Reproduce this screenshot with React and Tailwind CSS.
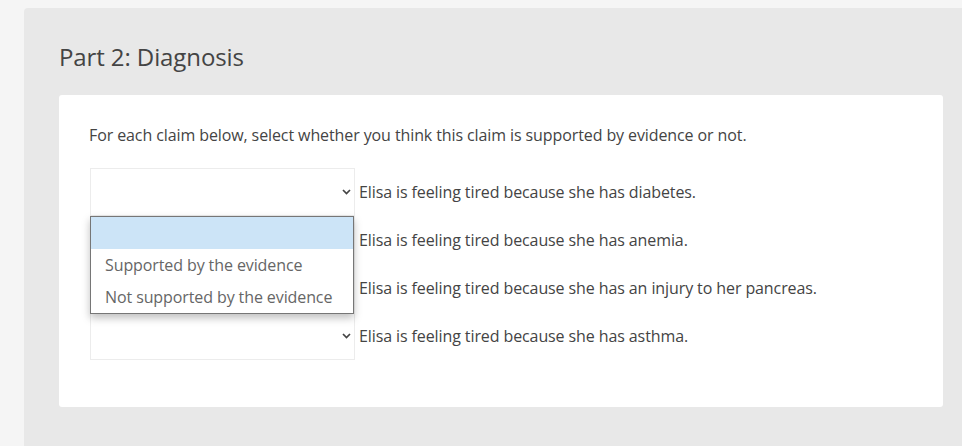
const claims = [
  "Elisa is feeling tired because she has diabetes.",
  "Elisa is feeling tired because she has anemia.",
  "Elisa is feeling tired because she has an injury to her pancreas.",
  "Elisa is feeling tired because she has asthma.",
];

function Chevron() {
  return (
    <svg width="9" height="6" viewBox="0 0 9 6" className="text-[#444]">
      <path d="M1 1l3.5 3.5L8 1" fill="none" stroke="currentColor" strokeWidth="1.7" />
    </svg>
  );
}

export default function App() {
  return (
    <div className="min-h-[446px] bg-[#f5f5f5] pt-2 pl-6 font-['Open_Sans',sans-serif] text-[#444]">
      <div className="min-h-[438px] rounded-tl-[4px] bg-[#e8e8e8] pl-[35px] pr-[19px] pt-[33px]">
        <h2 className="text-[24px] leading-[32px] font-normal tracking-[-0.1px] text-[#444]">Part 2: Diagnosis</h2>

        <div className="mt-[22px] rounded-[3px] bg-white pl-[30px] pr-[30px] pt-[28px] pb-[47px] tracking-[-0.1px]">
          <p className="text-[16px] leading-[24px]">
            For each claim below, select whether you think this claim is supported by evidence or not.
          </p>

          <div className="relative mt-[21px] flex flex-col">
            {claims.map((c, i) => (
              <div key={i} className="flex h-12 items-center">
                <div className="ml-px flex h-12 w-[265px] items-center justify-end border border-[#ececec] pr-[3px]">
                  <Chevron />
                </div>
                <span className="ml-[4px] text-[16px] leading-[24px]">{c}</span>
              </div>
            ))}

            <div className="absolute left-px top-[48px] w-[264px] border border-[#767676] bg-white shadow-[0_4px_8px_rgba(0,0,0,0.25)]">
              <div className="h-[32px] bg-[#cce4f7]"></div>
              <div className="flex h-[32px] items-center pl-[14px] text-[16px] text-[#666]">Supported by the evidence</div>
              <div className="flex h-[32px] items-center pl-[14px] text-[16px] text-[#666]">Not supported by the evidence</div>
            </div>
          </div>
        </div>
      </div>
    </div>
  );
}
